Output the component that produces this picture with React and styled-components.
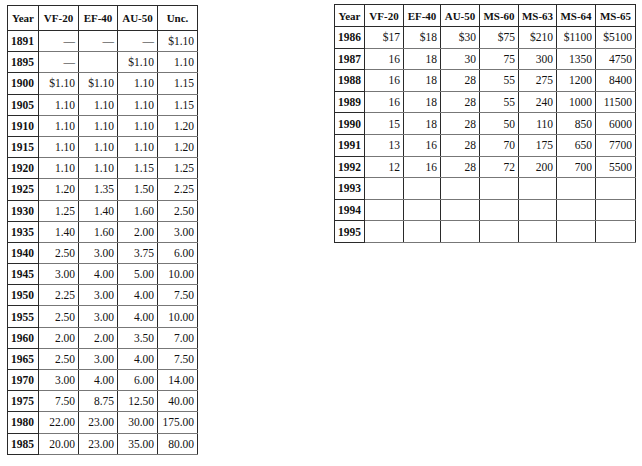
import React from "react";
import styled, { createGlobalStyle } from "styled-components";

const GlobalStyle = createGlobalStyle`
  html, body {
    margin: 0;
    padding: 0;
    background: #ffffff;
  }
  body {
    font-family: "Liberation Serif", "Times New Roman", serif;
    color: #111;
  }
`;

const Page = styled.div`
  display: flex;
  align-items: flex-start;
  gap: 136px;
  padding: 5px 0 0 7px;
`;

const Table = styled.table`
  border-collapse: collapse;
  border: 1.5px solid #222;
  font-size: 11.5px;
  table-layout: fixed;
  margin-top: ${(p) => p.$top || 0}px;
`;

const HeadCell = styled.th`
  border: 1px solid #2a2a2a;
  height: ${(p) => p.$h}px;
  padding: 0 2px;
  font-size: 11px;
  font-weight: bold;
  text-align: center;
  white-space: nowrap;
  width: ${(p) => p.$w}px;
  box-sizing: border-box;
`;

const YearCell = styled.td`
  border: 1px solid #2a2a2a;
  height: ${(p) => p.$h}px;
  padding: 0 3px;
  font-size: 11.5px;
  font-weight: bold;
  text-align: left;
  box-sizing: border-box;
`;

const ValueCell = styled.td`
  border: 1px solid #2a2a2a;
  border-top-color: #777;
  border-bottom-color: #777;
  height: ${(p) => p.$h}px;
  padding: 0 3px 0 0;
  text-align: right;
  white-space: nowrap;
  box-sizing: border-box;
`;

const leftCols = [
  ["Year", 31],
  ["VF-20", 40],
  ["EF-40", 39],
  ["AU-50", 40],
  ["Unc.", 40],
];

const leftRows = [
  ["1891", "—", "—", "—", "$1.10"],
  ["1895", "—", "", "$1.10", "1.10"],
  ["1900", "$1.10", "$1.10", "1.10", "1.15"],
  ["1905", "1.10", "1.10", "1.10", "1.15"],
  ["1910", "1.10", "1.10", "1.10", "1.20"],
  ["1915", "1.10", "1.10", "1.10", "1.20"],
  ["1920", "1.10", "1.10", "1.15", "1.25"],
  ["1925", "1.20", "1.35", "1.50", "2.25"],
  ["1930", "1.25", "1.40", "1.60", "2.50"],
  ["1935", "1.40", "1.60", "2.00", "3.00"],
  ["1940", "2.50", "3.00", "3.75", "6.00"],
  ["1945", "3.00", "4.00", "5.00", "10.00"],
  ["1950", "2.25", "3.00", "4.00", "7.50"],
  ["1955", "2.50", "3.00", "4.00", "10.00"],
  ["1960", "2.00", "2.00", "3.50", "7.00"],
  ["1965", "2.50", "3.00", "4.00", "7.50"],
  ["1970", "3.00", "4.00", "6.00", "14.00"],
  ["1975", "7.50", "8.75", "12.50", "40.00"],
  ["1980", "22.00", "23.00", "30.00", "175.00"],
  ["1985", "20.00", "23.00", "35.00", "80.00"],
];

const rightCols = [
  ["Year", 29],
  ["VF-20", 39],
  ["EF-40", 37],
  ["AU-50", 39],
  ["MS-60", 39],
  ["MS-63", 38],
  ["MS-64", 39],
  ["MS-65", 40],
];

const rightRows = [
  ["1986", "$17", "$18", "$30", "$75", "$210", "$1100", "$5100"],
  ["1987", "16", "18", "30", "75", "300", "1350", "4750"],
  ["1988", "16", "18", "28", "55", "275", "1200", "8400"],
  ["1989", "16", "18", "28", "55", "240", "1000", "11500"],
  ["1990", "15", "18", "28", "50", "110", "850", "6000"],
  ["1991", "13", "16", "28", "70", "175", "650", "7700"],
  ["1992", "12", "16", "28", "72", "200", "700", "5500"],
  ["1993", "", "", "", "", "", "", ""],
  ["1994", "", "", "", "", "", "", ""],
  ["1995", "", "", "", "", "", "", ""],
];

function PriceTable({ cols, rows, headH, rowH, top }) {
  return (
    <Table $top={top}>
      <thead>
        <tr>
          {cols.map(([label, w]) => (
            <HeadCell key={label} $w={w} $h={headH}>
              {label}
            </HeadCell>
          ))}
        </tr>
      </thead>
      <tbody>
        {rows.map(([year, ...values]) => (
          <tr key={year}>
            <YearCell $h={rowH}>{year}</YearCell>
            {values.map((v, i) => (
              <ValueCell key={i} $h={rowH}>
                {v}
              </ValueCell>
            ))}
          </tr>
        ))}
      </tbody>
    </Table>
  );
}

export default function App() {
  return (
    <>
      <GlobalStyle />
      <Page>
        <PriceTable cols={leftCols} rows={leftRows} headH={25} rowH={21.2} />
        <PriceTable cols={rightCols} rows={rightRows} headH={22} rowH={21.6} top={-1} />
      </Page>
    </>
  );
}
